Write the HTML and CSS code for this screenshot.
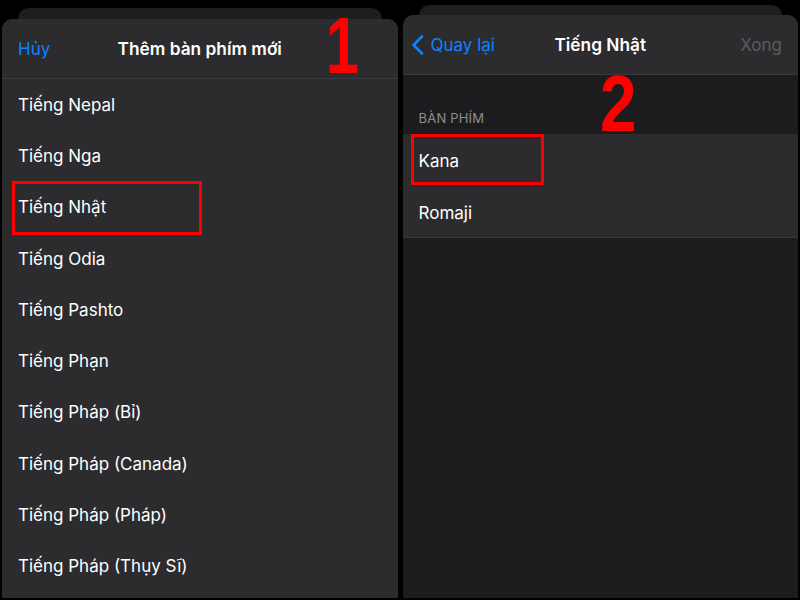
FILE: index.html
```html
<!DOCTYPE html>
<html lang="vi">
<head>
    <meta charset="UTF-8">
    <meta name="viewport" content="width=device-width, initial-scale=1.0">
    <title>Thêm bàn phím mới</title>
    <link rel="stylesheet" href="styles.css">
</head>
<body>
    <div class="screens">
        <!-- màn hình 1: danh sách ngôn ngữ -->
        <div class="panel panel-left">
            <div class="back-card"></div>
            <div class="sheet">
                <div class="nav">
                    <span class="nav-btn">Hủy</span>
                    <span class="nav-title">Thêm bàn phím mới</span>
                    <span class="nav-btn"></span>
                </div>
                <ul class="list">
                    <li>Tiếng Nepal</li>
                    <li>Tiếng Nga</li>
                    <li>Tiếng Nhật</li>
                    <li>Tiếng Odia</li>
                    <li>Tiếng Pashto</li>
                    <li>Tiếng Phạn</li>
                    <li>Tiếng Pháp (Bỉ)</li>
                    <li>Tiếng Pháp (Canada)</li>
                    <li>Tiếng Pháp (Pháp)</li>
                    <li>Tiếng Pháp (Thụy Sĩ)</li>
                </ul>
            </div>
            <span class="step step-1">1</span>
            <span class="mark mark-1"></span>
        </div>

        <!-- màn hình 2: chọn bàn phím tiếng Nhật -->
        <div class="panel panel-right">
            <div class="back-card"></div>
            <div class="sheet sheet-grouped">
                <div class="nav">
                    <span class="nav-btn nav-back">
                        <svg width="13" height="20" viewBox="0 0 13 20"><path d="M11 1.5 L2.5 10 L11 18.5" fill="none" stroke="#0a84ff" stroke-width="2.6" stroke-linecap="round" stroke-linejoin="round"/></svg>
                        Quay lại
                    </span>
                    <span class="nav-title">Tiếng Nhật</span>
                    <span class="nav-btn nav-done">Xong</span>
                </div>
                <div class="section-label">BÀN PHÍM</div>
                <ul class="list list-grouped">
                    <li>Kana</li>
                    <li>Romaji</li>
                </ul>
            </div>
            <span class="step step-2">2</span>
            <span class="mark mark-2"></span>
        </div>
    </div>
</body>
</html>
```

FILE: styles.css
```css
/* trang nền đen */
body {
    margin: 0;
    background: #000;
    font-family: Inter, "Noto Sans", sans-serif;
    color: #fff;
}

.screens {
    display: flex;
    height: 600px;
    overflow: hidden;
}

/* mỗi màn hình rộng 400px */
.panel {
    position: relative;
    width: 400px;
    display: flex;
    flex-direction: column;
}

.panel-left {
    padding: 8px 3px 2px 2px;
}

.panel-right {
    padding: 5px 2px 2px 2px;
}

/* thẻ phía sau */
.back-card {
    height: 11px;
    margin: 0 16px;
    background: #1e1e20;
    border-radius: 11px 11px 0 0;
}

.panel-right .back-card {
    height: 10px;
}

/* tấm chính */
.sheet {
    flex: 1;
    background: #2c2c2e;
    border-radius: 11px 11px 0 0;
    overflow: hidden;
}

.sheet-grouped {
    background: #1c1c1e;
}

/* thanh điều hướng */
.nav {
    height: 59px;
    display: grid;
    grid-template-columns: 1fr auto 1fr;
    align-items: center;
    padding: 0 16px;
    background: #2c2c2e;
    border-bottom: 1px solid #3a3a3c;
    font-size: 17px;
}

.nav-btn {
    color: #0a84ff;
    display: flex;
    align-items: center;
    gap: 7px;
}

.nav-back {
    margin-left: -8px;
}

.nav-done {
    color: #5b5b5f;
    justify-content: flex-end;
}

.nav-title {
    font-weight: 600;
    font-size: 17.3px;
}

/* danh sách */
.list {
    list-style: none;
    margin: 0;
    padding: 0;
}

.list li {
    height: 51.3px;
    box-sizing: border-box;
    display: flex;
    align-items: center;
    padding-left: 16px;
    font-size: 17px;
    background: #2c2c2e;
    box-shadow: inset 16px -1px 0 #2c2c2e, inset 0 -1px 0 #3a3a3c;
}

.section-label {
    padding: 35px 16px 8px;
    font-size: 13px;
    color: #8d8d93;
    letter-spacing: 0.2px;
}

.list-grouped li {
    height: 52px;
    padding-top: 2px;
}

.list-grouped li:last-child {
    box-shadow: inset 0 -1px 0 #38383a;
}

/* số thứ tự chỉ dẫn */
.step {
    position: absolute;
    color: #f00;
    font-family: "Liberation Sans", Arial, sans-serif;
    font-weight: 700;
    font-size: 80px;
    line-height: 1;
    transform: scaleX(0.82);
    transform-origin: left top;
}

.step-1 {
    left: 326px;
    top: 6px;
    transform: scaleX(0.74);
}

.step-2 {
    left: 199px;
    top: 64px;
}

/* khung đỏ đánh dấu */
.mark {
    position: absolute;
    border: 3px solid #f00;
    box-sizing: border-box;
}

.mark-1 {
    left: 12px;
    top: 181px;
    width: 190px;
    height: 54px;
}

.mark-2 {
    left: 10px;
    top: 134px;
    width: 133px;
    height: 51px;
}
```
